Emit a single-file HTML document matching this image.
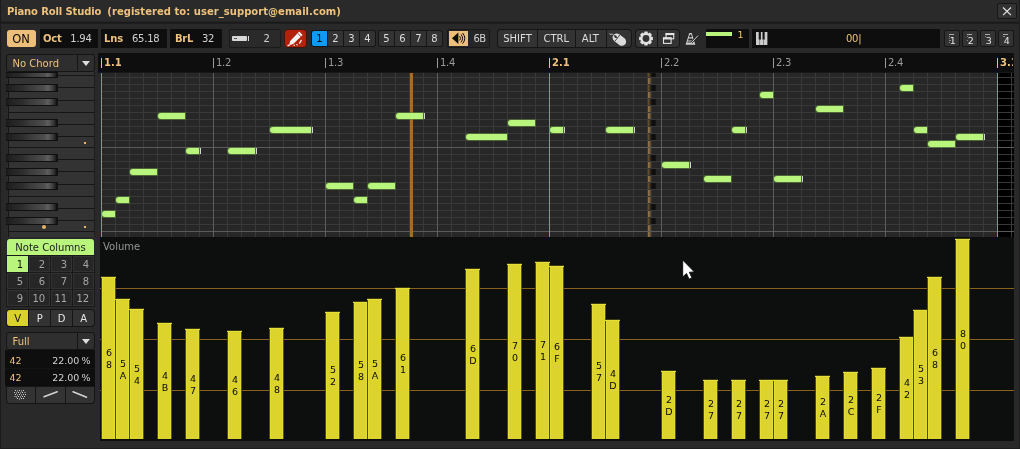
<!DOCTYPE html>
<html><head><meta charset="utf-8"><title>Piano Roll Studio</title>
<style>
html,body{margin:0;padding:0;}
body{width:1020px;height:449px;overflow:hidden;background:#282828;position:relative;font-family:"DejaVu Sans","Liberation Sans",sans-serif;font-size:10px;}
div{position:absolute;box-sizing:border-box;}
svg{position:absolute;overflow:visible;}
.btn{background:#2f2f2f;border:1px solid #161616;}
.dark{background:#0d0e0d;}
.n{background:#b9f47d;height:6px;border-radius:3px 0 0 3px;box-shadow:0 0 0 1px rgba(96,140,56,.55);}
.t{background:#d4d4d4;width:1px;height:6px;}
.bar{width:15px;background:linear-gradient(90deg,#4c4912 0,#4c4912 1px,#dcd42c 1px,#dcd42c 14px,#55521a 14px);}
.bar i{position:absolute;left:0;top:0;width:15px;height:2px;background:linear-gradient(180deg,#3c3a10 0,#3c3a10 1px,#e6df38 1px);}
.bar b{box-sizing:border-box;position:absolute;left:1px;top:2px;bottom:1px;width:13px;border-left:1px solid #e4dc34;border-right:1px solid #e4dc34;}
.bl{color:#0a0a04;font-size:9.5px;line-height:12px;width:14px;text-align:center;}
</style></head><body><div id="app" style="left:0;top:0;width:1020px;height:449px;will-change:transform;overflow:hidden;">

<div style="left:0px;top:0px;width:1020px;height:22px;background:#2a2a2a;"></div>
<div style="left:0px;top:21px;width:1020px;height:1px;background:#242424;"></div>
<div style="left:0px;top:22px;width:1020px;height:1px;background:#1a1a1a;"></div>
<div style="left:0px;top:23px;width:1020px;height:1px;background:#1d1d1d;"></div>
<div style="left:0px;top:24px;width:1020px;height:425px;background:#292929;"></div>
<div style="left:0px;top:0px;width:1px;height:449px;background:#1b1b1b;"></div>
<div style="left:1019px;top:0px;width:1px;height:449px;background:#1f1f1f;"></div>
<div style="left:0px;top:448px;width:1020px;height:1px;background:#1e1e1e;"></div>
<div style="top:5.74px;font-size:10px;line-height:12.0px;color:#eec27e;white-space:pre;font-weight:bold;left:7px;letter-spacing:-0.13px;">Piano Roll Studio</div>
<div style="top:5.74px;font-size:10px;line-height:12.0px;color:#eec27e;white-space:pre;font-weight:bold;left:107.3px;letter-spacing:0.04px;">(registered to: user_support@email.com)</div>
<div style="left:997px;top:3px;width:20px;height:16px;border-radius:2px;background:#333333;border:1px solid #171717;"></div>
<svg style="left:1002px;top:6.5px" width="10" height="9" viewBox="0 0 10 9"><path d="M1 0.5L9 8.2M9 0.5L1 8.2" stroke="#e4e4e4" stroke-width="1.15" fill="none"/></svg>
<div style="left:7px;top:30px;width:29px;height:17px;background:#ecbf7a;border-radius:3px;"></div>
<div style="top:32.72px;font-size:11.5px;line-height:13.8px;color:#080808;white-space:pre;left:-78.9px;width:200px;text-align:center;">ON</div>
<div class="dark" style="left:40px;top:29px;width:58px;height:19px;"></div>
<div style="top:32.94px;font-size:10px;line-height:12.0px;color:#eec27e;white-space:pre;font-weight:bold;left:43px;letter-spacing:-0.2px;">Oct</div>
<div style="top:32.94px;font-size:10px;line-height:12.0px;color:#d2d2d2;white-space:pre;left:70.3px;letter-spacing:-0.25px;">1.94</div>
<div class="dark" style="left:101px;top:29px;width:66px;height:19px;"></div>
<div style="top:32.94px;font-size:10px;line-height:12.0px;color:#eec27e;white-space:pre;font-weight:bold;left:104px;letter-spacing:-0.1px;">Lns</div>
<div style="top:32.94px;font-size:10px;line-height:12.0px;color:#d2d2d2;white-space:pre;left:132px;letter-spacing:-0.25px;">65.18</div>
<div class="dark" style="left:170px;top:29px;width:52px;height:19px;"></div>
<div style="top:32.94px;font-size:10px;line-height:12.0px;color:#eec27e;white-space:pre;font-weight:bold;left:175px;letter-spacing:-0.3px;">BrL</div>
<div style="top:32.94px;font-size:10px;line-height:12.0px;color:#d2d2d2;white-space:pre;left:202px;letter-spacing:-0.25px;">32</div>
<div style="left:229px;top:29px;width:52px;height:19px;border-radius:2px;background:#2a2a2a;border:1px solid #1a1a1a;"></div>
<div style="left:232px;top:36px;width:15px;height:5px;background:#d8d8d8;border-radius:1px;"></div>
<div style="left:234px;top:38px;width:3px;height:1px;background:#555;"></div>
<div style="left:247.5px;top:36px;width:1px;height:5px;background:#d8d8d8;"></div>
<div style="top:32.94px;font-size:10px;line-height:12.0px;color:#d2d2d2;white-space:pre;left:166.7px;width:200px;text-align:center;">2</div>
<div style="left:284px;top:29px;width:23px;height:19px;background:#b3220c;border-radius:4px;border:1px solid #3c150e;"></div>
<svg style="left:284px;top:29px" width="23" height="19" viewBox="0 0 23 19"><path d="M15.3 2.6L18.6 5.9L9.2 15L5.2 16.2L6.2 12Z" fill="#f4f4f4"/><path d="M13.7 4.4L17 7.7" stroke="#b3220c" stroke-width="0.9"/><path d="M3.6 16.9L5.6 15.9" stroke="#f4f4f4" stroke-width="1.2"/><circle cx="10.2" cy="16.3" r="0.75" fill="#f4f4f4"/><circle cx="13" cy="15.8" r="0.75" fill="#f4f4f4"/><path d="M15.6 14.2L17.2 11.4" stroke="#f4f4f4" stroke-width="1.3" stroke-linecap="round"/></svg>
<div style="left:311px;top:30px;width:65px;height:17px;background:#151515;border-radius:3px;"></div>
<div style="left:312px;top:31px;width:15px;height:15px;background:#0c9bf6;border-radius:2px 0 0 2px;"></div>
<div style="left:328px;top:31px;width:15px;height:15px;background:#333333;"></div>
<div style="left:344px;top:31px;width:15px;height:15px;background:#333333;"></div>
<div style="left:360px;top:31px;width:15px;height:15px;background:#333333;border-radius:0 2px 2px 0;"></div>
<div style="top:32.94px;font-size:10px;line-height:12.0px;color:#0a0a0a;white-space:pre;left:219.5px;width:200px;text-align:center;">1</div>
<div style="top:32.94px;font-size:10px;line-height:12.0px;color:#dcdcdc;white-space:pre;left:235.5px;width:200px;text-align:center;">2</div>
<div style="top:32.94px;font-size:10px;line-height:12.0px;color:#dcdcdc;white-space:pre;left:251.5px;width:200px;text-align:center;">3</div>
<div style="top:32.94px;font-size:10px;line-height:12.0px;color:#dcdcdc;white-space:pre;left:267.5px;width:200px;text-align:center;">4</div>
<div style="left:378px;top:30px;width:65px;height:17px;background:#151515;border-radius:3px;"></div>
<div style="left:379px;top:31px;width:15px;height:15px;background:#333333;border-radius:2px 0 0 2px;"></div>
<div style="left:395px;top:31px;width:15px;height:15px;background:#333333;"></div>
<div style="left:411px;top:31px;width:15px;height:15px;background:#333333;"></div>
<div style="left:427px;top:31px;width:15px;height:15px;background:#333333;border-radius:0 2px 2px 0;"></div>
<div style="top:32.94px;font-size:10px;line-height:12.0px;color:#dcdcdc;white-space:pre;left:286.5px;width:200px;text-align:center;">5</div>
<div style="top:32.94px;font-size:10px;line-height:12.0px;color:#dcdcdc;white-space:pre;left:302.5px;width:200px;text-align:center;">6</div>
<div style="top:32.94px;font-size:10px;line-height:12.0px;color:#dcdcdc;white-space:pre;left:318.5px;width:200px;text-align:center;">7</div>
<div style="top:32.94px;font-size:10px;line-height:12.0px;color:#dcdcdc;white-space:pre;left:334.5px;width:200px;text-align:center;">8</div>
<div style="left:447px;top:29px;width:43px;height:19px;border-radius:2px;background:#262626;border:1px solid #181818;"></div>
<div style="left:449px;top:31px;width:19px;height:15px;background:#ecbf7a;"></div>
<svg style="left:449px;top:31px" width="19" height="15" viewBox="0 0 19 15"><path d="M3 7.3L9.4 1.6V13Z" fill="#0c0c0c"/><path d="M10.6 5.2Q12.6 7.3 10.6 9.4M12 3.4Q15.2 7.3 12 11.2M13.6 2Q18 7.3 13.6 12.6" stroke="#0c0c0c" stroke-width="1" fill="none"/></svg>
<div style="top:32.94px;font-size:10px;line-height:12.0px;color:#d2d2d2;white-space:pre;left:379.6px;width:200px;text-align:center;letter-spacing:-0.4px;">6B</div>
<div style="left:497px;top:29px;width:135px;height:19px;background:#151515;border-radius:4px;"></div>
<div style="left:498px;top:30px;width:39px;height:17px;background:#333333;border-radius:3px 0 0 3px;"></div>
<div style="left:538px;top:30px;width:37px;height:17px;background:#333333;"></div>
<div style="left:576px;top:30px;width:30px;height:17px;background:#333333;"></div>
<div style="left:607px;top:30px;width:24px;height:17px;background:#333333;border-radius:0 3px 3px 0;"></div>
<div style="top:32.94px;font-size:10px;line-height:12.0px;color:#dcdcdc;white-space:pre;left:417.5px;width:200px;text-align:center;">SHIFT</div>
<div style="top:32.94px;font-size:10px;line-height:12.0px;color:#dcdcdc;white-space:pre;left:456.29999999999995px;width:200px;text-align:center;">CTRL</div>
<div style="top:32.94px;font-size:10px;line-height:12.0px;color:#dcdcdc;white-space:pre;left:490.4px;width:200px;text-align:center;">ALT</div>
<svg style="left:608px;top:30px" width="22" height="17" viewBox="0 0 22 17"><g transform="translate(11.4 9.7) rotate(-52)"><rect x="-4.2" y="-7.6" width="8.4" height="15" rx="4.2" fill="#dadada"/><path d="M0 -7.4V-2.6M-4 -2.6H4" stroke="#333" stroke-width="0.8"/><rect x="-1" y="-6.4" width="2" height="3" rx="1" fill="#333"/><path d="M0 -7.6Q0.4 -9.2 -0.8 -9.8T-1.2 -11.6" stroke="#dadada" stroke-width="0.8" fill="none"/></g></svg>
<div style="left:635px;top:29px;width:45px;height:19px;background:#151515;border-radius:4px;"></div>
<div style="left:636px;top:30px;width:21px;height:17px;background:#333333;border-radius:3px 0 0 3px;"></div>
<div style="left:658px;top:30px;width:21px;height:17px;background:#333333;border-radius:0 3px 3px 0;"></div>
<svg style="left:637.5px;top:30.8px" width="16" height="15" viewBox="-8 -7.5 16 15"><g fill="#e2e2e2"><path d="M-1.5 -6.9L1.5 -6.9L2.3 -4L-2.3 -4Z" transform="rotate(0)"/><path d="M-1.5 -6.9L1.5 -6.9L2.3 -4L-2.3 -4Z" transform="rotate(45)"/><path d="M-1.5 -6.9L1.5 -6.9L2.3 -4L-2.3 -4Z" transform="rotate(90)"/><path d="M-1.5 -6.9L1.5 -6.9L2.3 -4L-2.3 -4Z" transform="rotate(135)"/><path d="M-1.5 -6.9L1.5 -6.9L2.3 -4L-2.3 -4Z" transform="rotate(180)"/><path d="M-1.5 -6.9L1.5 -6.9L2.3 -4L-2.3 -4Z" transform="rotate(225)"/><path d="M-1.5 -6.9L1.5 -6.9L2.3 -4L-2.3 -4Z" transform="rotate(270)"/><path d="M-1.5 -6.9L1.5 -6.9L2.3 -4L-2.3 -4Z" transform="rotate(315)"/><circle r="5.3"/></g><circle r="3.4" fill="#333"/></svg>
<svg style="left:660px;top:30px" width="18" height="17" viewBox="660 30 18 17"><rect x="666.1" y="33.6" width="7.6" height="5.2" fill="none" stroke="#e2e2e2" stroke-width="1.1"/><rect x="665.55" y="33" width="8.7" height="2.1" fill="#e2e2e2"/><rect x="663.5" y="38" width="7.6" height="5.4" fill="#333" stroke="#e2e2e2" stroke-width="1.1"/><rect x="662.95" y="37.3" width="8.7" height="2.2" fill="#e2e2e2"/></svg>
<svg style="left:684px;top:32px" width="15" height="14" viewBox="0 0 15 14"><path d="M5.3 1H7.7L11.4 12.8H1.6Z" fill="#cfcfcf"/><path d="M5.8 2.6H7.2L8 5.2H5Z M4.6 6.4H8.4L9 8.6H4Z" fill="#262626"/><path d="M3.4 10H7" stroke="#262626" stroke-width="1"/><path d="M7.4 10.8L14 3.6" stroke="#262626" stroke-width="2.2"/><path d="M7.4 10.8L14 3.6" stroke="#cfcfcf" stroke-width="1"/></svg>
<div class="dark" style="left:706px;top:29px;width:43px;height:19px;"></div>
<div style="left:706px;top:32px;width:26px;height:4px;background:#b9f47d;"></div>
<div style="top:29.21px;font-size:9.5px;line-height:11.4px;color:#eec27e;white-space:pre;left:737.5px;">1</div>
<div class="dark" style="left:752px;top:29px;width:188px;height:19px;"></div>
<svg style="left:755.8px;top:32px" width="11.4" height="13" viewBox="0 0 11.4 13"><rect x="0" y="0" width="11.4" height="13" fill="#cdcdcd"/><rect x="2.7" y="0" width="2.2" height="7.6" fill="#161616"/><rect x="6.5" y="0" width="2.2" height="7.6" fill="#161616"/><rect x="3.55" y="7.6" width="0.5" height="5.4" fill="#444"/><rect x="7.35" y="7.6" width="0.5" height="5.4" fill="#444"/></svg>
<div style="top:32.94px;font-size:10px;line-height:12.0px;color:#eec27e;white-space:pre;left:846px;letter-spacing:-0.25px;">00|</div>
<div style="left:944px;top:30px;width:16px;height:17px;border-radius:2px;background:#333333;border:1px solid #151515;"></div>
<div style="top:35.21px;font-size:9.5px;line-height:11.4px;color:#e4e4e4;white-space:pre;left:852.7px;width:200px;text-align:center;">1</div>
<div style="left:949px;top:34px;width:5px;height:1px;background:#a8a8a8;"></div>
<div style="left:962px;top:30px;width:16px;height:17px;border-radius:2px;background:#333333;border:1px solid #151515;"></div>
<div style="top:35.21px;font-size:9.5px;line-height:11.4px;color:#e4e4e4;white-space:pre;left:870.7px;width:200px;text-align:center;">2</div>
<div style="left:967px;top:34px;width:5px;height:1px;background:#a8a8a8;"></div>
<div style="left:980px;top:30px;width:16px;height:17px;border-radius:2px;background:#333333;border:1px solid #151515;"></div>
<div style="top:35.21px;font-size:9.5px;line-height:11.4px;color:#e4e4e4;white-space:pre;left:888.7px;width:200px;text-align:center;">3</div>
<div style="left:985px;top:34px;width:5px;height:1px;background:#a8a8a8;"></div>
<div style="left:998px;top:30px;width:16px;height:17px;border-radius:2px;background:#333333;border:1px solid #151515;"></div>
<div style="top:35.21px;font-size:9.5px;line-height:11.4px;color:#e4e4e4;white-space:pre;left:906.7px;width:200px;text-align:center;">4</div>
<div style="left:1003px;top:34px;width:5px;height:1px;background:#a8a8a8;"></div>
<div style="left:949px;top:36px;width:1px;height:1px;background:#8a8a8a;"></div>
<div style="left:949px;top:38px;width:1px;height:1px;background:#8a8a8a;"></div>
<div style="left:949px;top:40px;width:2px;height:1px;background:#8a8a8a;"></div>
<div style="left:949px;top:42px;width:1px;height:1px;background:#8a8a8a;"></div>
<div style="left:967px;top:36px;width:1px;height:1px;background:#8a8a8a;"></div>
<div style="left:967px;top:40px;width:1px;height:1px;background:#8a8a8a;"></div>
<div style="left:985px;top:36px;width:1px;height:1px;background:#8a8a8a;"></div>
<div style="left:1003px;top:36px;width:2px;height:1px;background:#8a8a8a;"></div>
<div style="left:6px;top:54px;width:89px;height:18px;border-radius:3px;background:#2e2e2e;border:1px solid #151515;"></div>
<div style="left:77px;top:55px;width:1px;height:16px;background:#151515;"></div>
<div style="top:57.84px;font-size:10px;line-height:12.0px;color:#eec27e;white-space:pre;left:12.5px;">No Chord</div>
<svg style="left:82px;top:61px" width="8" height="5" viewBox="0 0 8 5"><path d="M0 0H8L4 5Z" fill="#dedede"/></svg>
<div class="dark" style="left:98px;top:53px;width:916px;height:19px;"></div>
<div style="left:101px;top:58px;width:1px;height:10px;background:#eec27e;"></div>
<div style="top:57.44px;font-size:10px;line-height:12.0px;color:#eec27e;white-space:pre;font-weight:bold;left:104px;letter-spacing:0px;">1.1</div>
<div style="left:213px;top:58px;width:1px;height:10px;background:#9a9a9a;"></div>
<div style="top:57.44px;font-size:10px;line-height:12.0px;color:#9a9a9a;white-space:pre;left:216px;letter-spacing:-0.3px;">1.2</div>
<div style="left:325px;top:58px;width:1px;height:10px;background:#9a9a9a;"></div>
<div style="top:57.44px;font-size:10px;line-height:12.0px;color:#9a9a9a;white-space:pre;left:328px;letter-spacing:-0.3px;">1.3</div>
<div style="left:437px;top:58px;width:1px;height:10px;background:#9a9a9a;"></div>
<div style="top:57.44px;font-size:10px;line-height:12.0px;color:#9a9a9a;white-space:pre;left:440px;letter-spacing:-0.3px;">1.4</div>
<div style="left:549px;top:58px;width:1px;height:10px;background:#eec27e;"></div>
<div style="top:57.44px;font-size:10px;line-height:12.0px;color:#eec27e;white-space:pre;font-weight:bold;left:552px;letter-spacing:0px;">2.1</div>
<div style="left:661px;top:58px;width:1px;height:10px;background:#9a9a9a;"></div>
<div style="top:57.44px;font-size:10px;line-height:12.0px;color:#9a9a9a;white-space:pre;left:664px;letter-spacing:-0.3px;">2.2</div>
<div style="left:773px;top:58px;width:1px;height:10px;background:#9a9a9a;"></div>
<div style="top:57.44px;font-size:10px;line-height:12.0px;color:#9a9a9a;white-space:pre;left:776px;letter-spacing:-0.3px;">2.3</div>
<div style="left:885px;top:58px;width:1px;height:10px;background:#9a9a9a;"></div>
<div style="top:57.44px;font-size:10px;line-height:12.0px;color:#9a9a9a;white-space:pre;left:888px;letter-spacing:-0.3px;">2.4</div>
<div style="left:997px;top:58px;width:1px;height:10px;background:#eec27e;"></div>
<div style="left:1000px;top:57.44px;width:13px;height:12px;overflow:hidden;font-size:10px;line-height:12px;color:#eec27e;font-weight:bold;">3.1</div>
<div style="left:6px;top:72px;width:89px;height:165px;background:#333333;"></div>
<div style="left:6px;top:72px;width:2px;height:165px;background:#2a2a2a;"></div>
<div style="left:8px;top:72px;width:1px;height:165px;background:#151515;"></div>
<div style="left:58px;top:75px;width:37px;height:1px;background:#161616;"></div>
<div style="left:58px;top:87px;width:37px;height:1px;background:#161616;"></div>
<div style="left:58px;top:100px;width:37px;height:1px;background:#161616;"></div>
<div style="left:9px;top:112px;width:86px;height:1px;background:#161616;"></div>
<div style="left:58px;top:124px;width:37px;height:1px;background:#161616;"></div>
<div style="left:58px;top:136px;width:37px;height:1px;background:#161616;"></div>
<div style="left:9px;top:147px;width:86px;height:1px;background:#161616;"></div>
<div style="left:58px;top:159px;width:37px;height:1px;background:#161616;"></div>
<div style="left:58px;top:171px;width:37px;height:1px;background:#161616;"></div>
<div style="left:58px;top:184px;width:37px;height:1px;background:#161616;"></div>
<div style="left:9px;top:196px;width:86px;height:1px;background:#161616;"></div>
<div style="left:58px;top:208px;width:37px;height:1px;background:#161616;"></div>
<div style="left:58px;top:220px;width:37px;height:1px;background:#161616;"></div>
<div style="left:9px;top:231px;width:86px;height:1px;background:#161616;"></div>
<div style="left:94px;top:72px;width:1px;height:165px;background:#1e1e1e;"></div>
<div style="left:6px;top:72px;width:52px;height:6px;background:linear-gradient(90deg,#141414 0%,#1e1e1e 3%,#242424 12%,#2c2c2c 30%,#3a3a3a 45%,#444444 60%,#4e4e4e 74%,#5e5e5e 80%,#545454 84%,#2e2e2e 93%,#141414 97%,#0e0e0e 100%);border-top:1px solid #101010;border-bottom:1px solid #101010;"></div>
<div style="left:6px;top:84px;width:52px;height:8px;background:linear-gradient(90deg,#141414 0%,#1e1e1e 3%,#242424 12%,#2c2c2c 30%,#3a3a3a 45%,#444444 60%,#4e4e4e 74%,#5e5e5e 80%,#545454 84%,#2e2e2e 93%,#141414 97%,#0e0e0e 100%);border-top:1px solid #101010;border-bottom:1px solid #101010;"></div>
<div style="left:6px;top:98px;width:52px;height:8px;background:linear-gradient(90deg,#141414 0%,#1e1e1e 3%,#242424 12%,#2c2c2c 30%,#3a3a3a 45%,#444444 60%,#4e4e4e 74%,#5e5e5e 80%,#545454 84%,#2e2e2e 93%,#141414 97%,#0e0e0e 100%);border-top:1px solid #101010;border-bottom:1px solid #101010;"></div>
<div style="left:6px;top:119px;width:52px;height:8px;background:linear-gradient(90deg,#141414 0%,#1e1e1e 3%,#242424 12%,#2c2c2c 30%,#3a3a3a 45%,#444444 60%,#4e4e4e 74%,#5e5e5e 80%,#545454 84%,#2e2e2e 93%,#141414 97%,#0e0e0e 100%);border-top:1px solid #101010;border-bottom:1px solid #101010;"></div>
<div style="left:6px;top:133px;width:52px;height:8px;background:linear-gradient(90deg,#141414 0%,#1e1e1e 3%,#242424 12%,#2c2c2c 30%,#3a3a3a 45%,#444444 60%,#4e4e4e 74%,#5e5e5e 80%,#545454 84%,#2e2e2e 93%,#141414 97%,#0e0e0e 100%);border-top:1px solid #101010;border-bottom:1px solid #101010;"></div>
<div style="left:6px;top:154px;width:52px;height:8px;background:linear-gradient(90deg,#141414 0%,#1e1e1e 3%,#242424 12%,#2c2c2c 30%,#3a3a3a 45%,#444444 60%,#4e4e4e 74%,#5e5e5e 80%,#545454 84%,#2e2e2e 93%,#141414 97%,#0e0e0e 100%);border-top:1px solid #101010;border-bottom:1px solid #101010;"></div>
<div style="left:6px;top:168px;width:52px;height:8px;background:linear-gradient(90deg,#141414 0%,#1e1e1e 3%,#242424 12%,#2c2c2c 30%,#3a3a3a 45%,#444444 60%,#4e4e4e 74%,#5e5e5e 80%,#545454 84%,#2e2e2e 93%,#141414 97%,#0e0e0e 100%);border-top:1px solid #101010;border-bottom:1px solid #101010;"></div>
<div style="left:6px;top:182px;width:52px;height:8px;background:linear-gradient(90deg,#141414 0%,#1e1e1e 3%,#242424 12%,#2c2c2c 30%,#3a3a3a 45%,#444444 60%,#4e4e4e 74%,#5e5e5e 80%,#545454 84%,#2e2e2e 93%,#141414 97%,#0e0e0e 100%);border-top:1px solid #101010;border-bottom:1px solid #101010;"></div>
<div style="left:6px;top:203px;width:52px;height:8px;background:linear-gradient(90deg,#141414 0%,#1e1e1e 3%,#242424 12%,#2c2c2c 30%,#3a3a3a 45%,#444444 60%,#4e4e4e 74%,#5e5e5e 80%,#545454 84%,#2e2e2e 93%,#141414 97%,#0e0e0e 100%);border-top:1px solid #101010;border-bottom:1px solid #101010;"></div>
<div style="left:6px;top:217px;width:52px;height:8px;background:linear-gradient(90deg,#141414 0%,#1e1e1e 3%,#242424 12%,#2c2c2c 30%,#3a3a3a 45%,#444444 60%,#4e4e4e 74%,#5e5e5e 80%,#545454 84%,#2e2e2e 93%,#141414 97%,#0e0e0e 100%);border-top:1px solid #101010;border-bottom:1px solid #101010;"></div>
<div style="left:84px;top:142px;width:2px;height:2px;background:#e8b468;"></div>
<div style="left:84px;top:226px;width:2px;height:2px;background:#e8b468;"></div>
<div style="left:42px;top:225px;width:4px;height:4px;background:#e8b468;border-radius:2px;"></div>
<div style="left:98px;top:72px;width:916px;height:1px;background:#171717;"></div>
<div style="left:100px;top:73px;width:914px;height:164px;overflow:hidden;background:#272727;">
<div style="left:15px;top:-1px;width:1px;height:165px;background:#393939;"></div>
<div style="left:29px;top:-1px;width:1px;height:165px;background:#393939;"></div>
<div style="left:43px;top:-1px;width:1px;height:165px;background:#393939;"></div>
<div style="left:57px;top:-1px;width:1px;height:165px;background:#393939;"></div>
<div style="left:71px;top:-1px;width:1px;height:165px;background:#393939;"></div>
<div style="left:85px;top:-1px;width:1px;height:165px;background:#393939;"></div>
<div style="left:99px;top:-1px;width:1px;height:165px;background:#393939;"></div>
<div style="left:127px;top:-1px;width:1px;height:165px;background:#393939;"></div>
<div style="left:141px;top:-1px;width:1px;height:165px;background:#393939;"></div>
<div style="left:155px;top:-1px;width:1px;height:165px;background:#393939;"></div>
<div style="left:169px;top:-1px;width:1px;height:165px;background:#393939;"></div>
<div style="left:183px;top:-1px;width:1px;height:165px;background:#393939;"></div>
<div style="left:197px;top:-1px;width:1px;height:165px;background:#393939;"></div>
<div style="left:211px;top:-1px;width:1px;height:165px;background:#393939;"></div>
<div style="left:239px;top:-1px;width:1px;height:165px;background:#393939;"></div>
<div style="left:253px;top:-1px;width:1px;height:165px;background:#393939;"></div>
<div style="left:267px;top:-1px;width:1px;height:165px;background:#393939;"></div>
<div style="left:281px;top:-1px;width:1px;height:165px;background:#393939;"></div>
<div style="left:295px;top:-1px;width:1px;height:165px;background:#393939;"></div>
<div style="left:309px;top:-1px;width:1px;height:165px;background:#393939;"></div>
<div style="left:323px;top:-1px;width:1px;height:165px;background:#393939;"></div>
<div style="left:351px;top:-1px;width:1px;height:165px;background:#393939;"></div>
<div style="left:365px;top:-1px;width:1px;height:165px;background:#393939;"></div>
<div style="left:379px;top:-1px;width:1px;height:165px;background:#393939;"></div>
<div style="left:393px;top:-1px;width:1px;height:165px;background:#393939;"></div>
<div style="left:407px;top:-1px;width:1px;height:165px;background:#393939;"></div>
<div style="left:421px;top:-1px;width:1px;height:165px;background:#393939;"></div>
<div style="left:435px;top:-1px;width:1px;height:165px;background:#393939;"></div>
<div style="left:463px;top:-1px;width:1px;height:165px;background:#393939;"></div>
<div style="left:477px;top:-1px;width:1px;height:165px;background:#393939;"></div>
<div style="left:491px;top:-1px;width:1px;height:165px;background:#393939;"></div>
<div style="left:505px;top:-1px;width:1px;height:165px;background:#393939;"></div>
<div style="left:519px;top:-1px;width:1px;height:165px;background:#393939;"></div>
<div style="left:533px;top:-1px;width:1px;height:165px;background:#393939;"></div>
<div style="left:547px;top:-1px;width:1px;height:165px;background:#393939;"></div>
<div style="left:575px;top:-1px;width:1px;height:165px;background:#393939;"></div>
<div style="left:589px;top:-1px;width:1px;height:165px;background:#393939;"></div>
<div style="left:603px;top:-1px;width:1px;height:165px;background:#393939;"></div>
<div style="left:617px;top:-1px;width:1px;height:165px;background:#393939;"></div>
<div style="left:631px;top:-1px;width:1px;height:165px;background:#393939;"></div>
<div style="left:645px;top:-1px;width:1px;height:165px;background:#393939;"></div>
<div style="left:659px;top:-1px;width:1px;height:165px;background:#393939;"></div>
<div style="left:687px;top:-1px;width:1px;height:165px;background:#393939;"></div>
<div style="left:701px;top:-1px;width:1px;height:165px;background:#393939;"></div>
<div style="left:715px;top:-1px;width:1px;height:165px;background:#393939;"></div>
<div style="left:729px;top:-1px;width:1px;height:165px;background:#393939;"></div>
<div style="left:743px;top:-1px;width:1px;height:165px;background:#393939;"></div>
<div style="left:757px;top:-1px;width:1px;height:165px;background:#393939;"></div>
<div style="left:771px;top:-1px;width:1px;height:165px;background:#393939;"></div>
<div style="left:799px;top:-1px;width:1px;height:165px;background:#393939;"></div>
<div style="left:813px;top:-1px;width:1px;height:165px;background:#393939;"></div>
<div style="left:827px;top:-1px;width:1px;height:165px;background:#393939;"></div>
<div style="left:841px;top:-1px;width:1px;height:165px;background:#393939;"></div>
<div style="left:855px;top:-1px;width:1px;height:165px;background:#393939;"></div>
<div style="left:869px;top:-1px;width:1px;height:165px;background:#393939;"></div>
<div style="left:883px;top:-1px;width:1px;height:165px;background:#393939;"></div>
<div style="left:911px;top:-1px;width:1px;height:165px;background:#393939;"></div>
<div style="left:898px;top:-1px;width:16px;height:165px;background:#000;"></div>
<div style="left:911px;top:-1px;width:1px;height:165px;background:#3a3a3a;"></div>
<div style="left:548px;top:-1px;width:4px;height:165px;background:linear-gradient(90deg,#98794a,#7a6240 40%,#272727);"></div>
<div style="left:548px;top:-1px;width:4px;height:5px;background:linear-gradient(90deg,#6e5836,#3a2f1e 50%,#0e0e0e);"></div>
<div style="left:552px;top:-1px;width:4px;height:5px;background:linear-gradient(90deg,#0e0e0e 70%,#1a1a1a);"></div>
<div style="left:548px;top:11px;width:4px;height:7px;background:linear-gradient(90deg,#6e5836,#3a2f1e 50%,#0e0e0e);"></div>
<div style="left:552px;top:11px;width:4px;height:7px;background:linear-gradient(90deg,#0e0e0e 70%,#1a1a1a);"></div>
<div style="left:548px;top:25px;width:4px;height:7px;background:linear-gradient(90deg,#6e5836,#3a2f1e 50%,#0e0e0e);"></div>
<div style="left:552px;top:25px;width:4px;height:7px;background:linear-gradient(90deg,#0e0e0e 70%,#1a1a1a);"></div>
<div style="left:548px;top:46px;width:4px;height:7px;background:linear-gradient(90deg,#6e5836,#3a2f1e 50%,#0e0e0e);"></div>
<div style="left:552px;top:46px;width:4px;height:7px;background:linear-gradient(90deg,#0e0e0e 70%,#1a1a1a);"></div>
<div style="left:548px;top:60px;width:4px;height:7px;background:linear-gradient(90deg,#6e5836,#3a2f1e 50%,#0e0e0e);"></div>
<div style="left:552px;top:60px;width:4px;height:7px;background:linear-gradient(90deg,#0e0e0e 70%,#1a1a1a);"></div>
<div style="left:548px;top:81px;width:4px;height:7px;background:linear-gradient(90deg,#6e5836,#3a2f1e 50%,#0e0e0e);"></div>
<div style="left:552px;top:81px;width:4px;height:7px;background:linear-gradient(90deg,#0e0e0e 70%,#1a1a1a);"></div>
<div style="left:548px;top:95px;width:4px;height:7px;background:linear-gradient(90deg,#6e5836,#3a2f1e 50%,#0e0e0e);"></div>
<div style="left:552px;top:95px;width:4px;height:7px;background:linear-gradient(90deg,#0e0e0e 70%,#1a1a1a);"></div>
<div style="left:548px;top:109px;width:4px;height:7px;background:linear-gradient(90deg,#6e5836,#3a2f1e 50%,#0e0e0e);"></div>
<div style="left:552px;top:109px;width:4px;height:7px;background:linear-gradient(90deg,#0e0e0e 70%,#1a1a1a);"></div>
<div style="left:548px;top:130px;width:4px;height:7px;background:linear-gradient(90deg,#6e5836,#3a2f1e 50%,#0e0e0e);"></div>
<div style="left:552px;top:130px;width:4px;height:7px;background:linear-gradient(90deg,#0e0e0e 70%,#1a1a1a);"></div>
<div style="left:548px;top:144px;width:4px;height:7px;background:linear-gradient(90deg,#6e5836,#3a2f1e 50%,#0e0e0e);"></div>
<div style="left:552px;top:144px;width:4px;height:7px;background:linear-gradient(90deg,#0e0e0e 70%,#1a1a1a);"></div>
<div style="left:1px;top:4px;width:913px;height:1px;background:#393939;"></div>
<div style="left:1px;top:11px;width:913px;height:1px;background:#393939;"></div>
<div style="left:1px;top:18px;width:913px;height:1px;background:#393939;"></div>
<div style="left:1px;top:25px;width:913px;height:1px;background:#393939;"></div>
<div style="left:1px;top:32px;width:913px;height:1px;background:#393939;"></div>
<div style="left:1px;top:39px;width:913px;height:1px;background:#393939;"></div>
<div style="left:1px;top:46px;width:913px;height:1px;background:#393939;"></div>
<div style="left:1px;top:53px;width:913px;height:1px;background:#393939;"></div>
<div style="left:1px;top:60px;width:913px;height:1px;background:#393939;"></div>
<div style="left:1px;top:67px;width:913px;height:1px;background:#393939;"></div>
<div style="left:1px;top:74px;width:913px;height:1px;background:#5a5a5a;"></div>
<div style="left:1px;top:81px;width:913px;height:1px;background:#393939;"></div>
<div style="left:1px;top:88px;width:913px;height:1px;background:#393939;"></div>
<div style="left:1px;top:95px;width:913px;height:1px;background:#393939;"></div>
<div style="left:1px;top:102px;width:913px;height:1px;background:#393939;"></div>
<div style="left:1px;top:109px;width:913px;height:1px;background:#393939;"></div>
<div style="left:1px;top:116px;width:913px;height:1px;background:#393939;"></div>
<div style="left:1px;top:123px;width:913px;height:1px;background:#393939;"></div>
<div style="left:1px;top:130px;width:913px;height:1px;background:#393939;"></div>
<div style="left:1px;top:137px;width:913px;height:1px;background:#393939;"></div>
<div style="left:1px;top:144px;width:913px;height:1px;background:#393939;"></div>
<div style="left:1px;top:151px;width:913px;height:1px;background:#393939;"></div>
<div style="left:1px;top:158px;width:913px;height:1px;background:#5a5a5a;"></div>
<div style="left:1px;top:-1px;width:1px;height:165px;background:#b98a44;"></div>
<div style="left:113px;top:-1px;width:1px;height:165px;background:#5e5e5e;"></div>
<div style="left:225px;top:-1px;width:1px;height:165px;background:#5e5e5e;"></div>
<div style="left:337px;top:-1px;width:1px;height:165px;background:#5e5e5e;"></div>
<div style="left:449px;top:-1px;width:1px;height:165px;background:#b98a44;"></div>
<div style="left:561px;top:-1px;width:1px;height:165px;background:#5e5e5e;"></div>
<div style="left:673px;top:-1px;width:1px;height:165px;background:#5e5e5e;"></div>
<div style="left:785px;top:-1px;width:1px;height:165px;background:#5e5e5e;"></div>
<div style="left:897px;top:-1px;width:1px;height:165px;background:#b98a44;"></div>
<div style="left:310px;top:-1px;width:3px;height:165px;background:#a06e24;"></div>
<div class="n" style="left:2px;top:138px;width:13px;height:6px;"></div>
<div class="n" style="left:16px;top:124px;width:13px;height:6px;"></div>
<div class="n" style="left:30px;top:96px;width:27px;height:6px;"></div>
<div class="n" style="left:58px;top:40px;width:27px;height:6px;"></div>
<div class="n" style="left:86px;top:75px;width:13px;height:6px;"></div>
<div class="t" style="left:100px;top:75px;width:1px;height:6px;"></div>
<div class="n" style="left:128px;top:75px;width:27px;height:6px;"></div>
<div class="t" style="left:156px;top:75px;width:1px;height:6px;"></div>
<div class="n" style="left:170px;top:54px;width:41px;height:6px;"></div>
<div class="t" style="left:212px;top:54px;width:1px;height:6px;"></div>
<div class="n" style="left:226px;top:110px;width:27px;height:6px;"></div>
<div class="n" style="left:254px;top:124px;width:13px;height:6px;"></div>
<div class="n" style="left:268px;top:110px;width:27px;height:6px;"></div>
<div class="n" style="left:296px;top:40px;width:27px;height:6px;"></div>
<div class="t" style="left:324px;top:40px;width:1px;height:6px;"></div>
<div class="n" style="left:366px;top:61px;width:41px;height:6px;"></div>
<div class="n" style="left:408px;top:47px;width:27px;height:6px;"></div>
<div class="n" style="left:450px;top:54px;width:13px;height:6px;"></div>
<div class="t" style="left:464px;top:54px;width:1px;height:6px;"></div>
<div class="n" style="left:506px;top:54px;width:27px;height:6px;"></div>
<div class="t" style="left:534px;top:54px;width:1px;height:6px;"></div>
<div class="n" style="left:562px;top:89px;width:27px;height:6px;"></div>
<div class="t" style="left:590px;top:89px;width:1px;height:6px;"></div>
<div class="n" style="left:604px;top:103px;width:27px;height:6px;"></div>
<div class="n" style="left:632px;top:54px;width:13px;height:6px;"></div>
<div class="t" style="left:646px;top:54px;width:1px;height:6px;"></div>
<div class="n" style="left:660px;top:19px;width:13px;height:6px;"></div>
<div class="n" style="left:674px;top:103px;width:27px;height:6px;"></div>
<div class="t" style="left:702px;top:103px;width:1px;height:6px;"></div>
<div class="n" style="left:716px;top:33px;width:27px;height:6px;"></div>
<div class="n" style="left:800px;top:12px;width:13px;height:6px;"></div>
<div class="n" style="left:814px;top:54px;width:13px;height:6px;"></div>
<div class="n" style="left:828px;top:68px;width:27px;height:6px;"></div>
<div class="n" style="left:856px;top:61px;width:27px;height:6px;"></div>
<div class="t" style="left:884px;top:61px;width:1px;height:6px;"></div>
</div>
<div style="left:100px;top:237px;width:914px;height:204px;overflow:hidden;background:#0d0f0e;">
<div style="left:0;top:51px;width:914px;height:1px;background:#8a6220;"></div>
<div style="left:0;top:102px;width:914px;height:1px;background:#8a6220;"></div>
<div style="left:0;top:153px;width:914px;height:1px;background:#8a6220;"></div>
<div style="left:3px;top:4.14px;font-size:10px;line-height:12px;color:#949494;">Volume</div>
<div class="bar" style="left:1px;top:39px;height:163px;"><i></i><b></b></div>
<div class="bl" style="left:2px;top:109.7px;">6<br>8</div>
<div class="bar" style="left:15px;top:61px;height:141px;"><i></i><b></b></div>
<div class="bl" style="left:16px;top:120.7px;">5<br>A</div>
<div class="bar" style="left:29px;top:71px;height:131px;"><i></i><b></b></div>
<div class="bl" style="left:30px;top:125.7px;">5<br>4</div>
<div class="bar" style="left:57px;top:85px;height:117px;"><i></i><b></b></div>
<div class="bl" style="left:58px;top:132.7px;">4<br>B</div>
<div class="bar" style="left:85px;top:91px;height:111px;"><i></i><b></b></div>
<div class="bl" style="left:86px;top:135.7px;">4<br>7</div>
<div class="bar" style="left:127px;top:93px;height:109px;"><i></i><b></b></div>
<div class="bl" style="left:128px;top:136.7px;">4<br>6</div>
<div class="bar" style="left:169px;top:90px;height:112px;"><i></i><b></b></div>
<div class="bl" style="left:170px;top:135.2px;">4<br>8</div>
<div class="bar" style="left:225px;top:74px;height:128px;"><i></i><b></b></div>
<div class="bl" style="left:226px;top:127.2px;">5<br>2</div>
<div class="bar" style="left:253px;top:64px;height:138px;"><i></i><b></b></div>
<div class="bl" style="left:254px;top:122.2px;">5<br>8</div>
<div class="bar" style="left:267px;top:61px;height:141px;"><i></i><b></b></div>
<div class="bl" style="left:268px;top:120.7px;">5<br>A</div>
<div class="bar" style="left:295px;top:50px;height:152px;"><i></i><b></b></div>
<div class="bl" style="left:296px;top:115.2px;">6<br>1</div>
<div class="bar" style="left:365px;top:31px;height:171px;"><i></i><b></b></div>
<div class="bl" style="left:366px;top:105.7px;">6<br>D</div>
<div class="bar" style="left:407px;top:26px;height:176px;"><i></i><b></b></div>
<div class="bl" style="left:408px;top:103.2px;">7<br>0</div>
<div class="bar" style="left:435px;top:24px;height:178px;"><i></i><b></b></div>
<div class="bl" style="left:436px;top:102.2px;">7<br>1</div>
<div class="bar" style="left:449px;top:28px;height:174px;"><i></i><b></b></div>
<div class="bl" style="left:450px;top:104.2px;">6<br>F</div>
<div class="bar" style="left:491px;top:66px;height:136px;"><i></i><b></b></div>
<div class="bl" style="left:492px;top:123.2px;">5<br>7</div>
<div class="bar" style="left:505px;top:82px;height:120px;"><i></i><b></b></div>
<div class="bl" style="left:506px;top:131.2px;">4<br>D</div>
<div class="bar" style="left:561px;top:133px;height:69px;"><i></i><b></b></div>
<div class="bl" style="left:562px;top:156.7px;">2<br>D</div>
<div class="bar" style="left:603px;top:142px;height:60px;"><i></i><b></b></div>
<div class="bl" style="left:604px;top:161.2px;">2<br>7</div>
<div class="bar" style="left:631px;top:142px;height:60px;"><i></i><b></b></div>
<div class="bl" style="left:632px;top:161.2px;">2<br>7</div>
<div class="bar" style="left:659px;top:142px;height:60px;"><i></i><b></b></div>
<div class="bl" style="left:660px;top:161.2px;">2<br>7</div>
<div class="bar" style="left:673px;top:142px;height:60px;"><i></i><b></b></div>
<div class="bl" style="left:674px;top:161.2px;">2<br>7</div>
<div class="bar" style="left:715px;top:138px;height:64px;"><i></i><b></b></div>
<div class="bl" style="left:716px;top:159.2px;">2<br>A</div>
<div class="bar" style="left:743px;top:134px;height:68px;"><i></i><b></b></div>
<div class="bl" style="left:744px;top:157.2px;">2<br>C</div>
<div class="bar" style="left:771px;top:130px;height:72px;"><i></i><b></b></div>
<div class="bl" style="left:772px;top:155.2px;">2<br>F</div>
<div class="bar" style="left:799px;top:99px;height:103px;"><i></i><b></b></div>
<div class="bl" style="left:800px;top:139.7px;">4<br>2</div>
<div class="bar" style="left:813px;top:72px;height:130px;"><i></i><b></b></div>
<div class="bl" style="left:814px;top:126.2px;">5<br>3</div>
<div class="bar" style="left:827px;top:39px;height:163px;"><i></i><b></b></div>
<div class="bl" style="left:828px;top:109.7px;">6<br>8</div>
<div class="bar" style="left:855px;top:1px;height:201px;"><i></i><b></b></div>
<div class="bl" style="left:856px;top:90.7px;">8<br>0</div>
</div>
<div style="left:7px;top:239px;width:87px;height:16px;background:#b9f47d;border-radius:3px 3px 0 0;"></div>
<div style="top:241.84px;font-size:10px;line-height:12.0px;color:#1c1c1c;white-space:pre;left:-49.5px;width:200px;text-align:center;">Note Columns</div>
<div style="left:6px;top:255px;width:89px;height:52px;background:#191919;"></div>
<div style="left:7px;top:256px;width:21px;height:16px;background:#b9f47d;"></div>
<div style="top:258.74px;font-size:10px;line-height:12.0px;color:#111;white-space:pre;left:-177.3px;width:200px;text-align:right;letter-spacing:-0.3px;">1</div>
<div style="left:29px;top:256px;width:21px;height:16px;background:#262626;border:1px solid #323232;"></div>
<div style="top:258.74px;font-size:10px;line-height:12.0px;color:#a6a6a6;white-space:pre;left:-155.3px;width:200px;text-align:right;letter-spacing:-0.3px;">2</div>
<div style="left:51px;top:256px;width:21px;height:16px;background:#262626;border:1px solid #323232;"></div>
<div style="top:258.74px;font-size:10px;line-height:12.0px;color:#a6a6a6;white-space:pre;left:-133.3px;width:200px;text-align:right;letter-spacing:-0.3px;">3</div>
<div style="left:73px;top:256px;width:21px;height:16px;background:#262626;border:1px solid #323232;"></div>
<div style="top:258.74px;font-size:10px;line-height:12.0px;color:#a6a6a6;white-space:pre;left:-111.3px;width:200px;text-align:right;letter-spacing:-0.3px;">4</div>
<div style="left:7px;top:273px;width:21px;height:16px;background:#262626;border:1px solid #323232;"></div>
<div style="top:275.74px;font-size:10px;line-height:12.0px;color:#a6a6a6;white-space:pre;left:-177.3px;width:200px;text-align:right;letter-spacing:-0.3px;">5</div>
<div style="left:29px;top:273px;width:21px;height:16px;background:#262626;border:1px solid #323232;"></div>
<div style="top:275.74px;font-size:10px;line-height:12.0px;color:#a6a6a6;white-space:pre;left:-155.3px;width:200px;text-align:right;letter-spacing:-0.3px;">6</div>
<div style="left:51px;top:273px;width:21px;height:16px;background:#262626;border:1px solid #323232;"></div>
<div style="top:275.74px;font-size:10px;line-height:12.0px;color:#a6a6a6;white-space:pre;left:-133.3px;width:200px;text-align:right;letter-spacing:-0.3px;">7</div>
<div style="left:73px;top:273px;width:21px;height:16px;background:#262626;border:1px solid #323232;"></div>
<div style="top:275.74px;font-size:10px;line-height:12.0px;color:#a6a6a6;white-space:pre;left:-111.3px;width:200px;text-align:right;letter-spacing:-0.3px;">8</div>
<div style="left:7px;top:290px;width:21px;height:16px;background:#262626;border:1px solid #323232;"></div>
<div style="top:292.74px;font-size:10px;line-height:12.0px;color:#a6a6a6;white-space:pre;left:-177.3px;width:200px;text-align:right;letter-spacing:-0.3px;">9</div>
<div style="left:29px;top:290px;width:21px;height:16px;background:#262626;border:1px solid #323232;"></div>
<div style="top:292.74px;font-size:10px;line-height:12.0px;color:#a6a6a6;white-space:pre;left:-155.3px;width:200px;text-align:right;letter-spacing:-0.3px;">10</div>
<div style="left:51px;top:290px;width:21px;height:16px;background:#262626;border:1px solid #323232;"></div>
<div style="top:292.74px;font-size:10px;line-height:12.0px;color:#a6a6a6;white-space:pre;left:-133.3px;width:200px;text-align:right;letter-spacing:-0.3px;">11</div>
<div style="left:73px;top:290px;width:21px;height:16px;background:#262626;border:1px solid #323232;"></div>
<div style="top:292.74px;font-size:10px;line-height:12.0px;color:#a6a6a6;white-space:pre;left:-111.3px;width:200px;text-align:right;letter-spacing:-0.3px;">12</div>
<div style="left:6px;top:309px;width:89px;height:18px;background:#151515;border-radius:4px;"></div>
<div style="left:7px;top:310px;width:21px;height:16px;background:#d9d22c;border-radius:3px 0 0 3px;"></div>
<div style="left:29px;top:310px;width:21px;height:16px;background:#333333;"></div>
<div style="left:51px;top:310px;width:21px;height:16px;background:#333333;"></div>
<div style="left:73px;top:310px;width:21px;height:16px;background:#333333;border-radius:0 3px 3px 0;"></div>
<div style="top:312.74px;font-size:10px;line-height:12.0px;color:#15150a;white-space:pre;left:-82.3px;width:200px;text-align:center;">V</div>
<div style="top:312.74px;font-size:10px;line-height:12.0px;color:#e6e6e6;white-space:pre;left:-60.3px;width:200px;text-align:center;">P</div>
<div style="top:312.74px;font-size:10px;line-height:12.0px;color:#e6e6e6;white-space:pre;left:-38.3px;width:200px;text-align:center;">D</div>
<div style="top:312.74px;font-size:10px;line-height:12.0px;color:#e6e6e6;white-space:pre;left:-16.299999999999997px;width:200px;text-align:center;">A</div>
<div style="left:6px;top:332px;width:89px;height:18px;border-radius:3px;background:#2f2f2f;border:1px solid #151515;"></div>
<div style="left:77px;top:333px;width:1px;height:16px;background:#151515;"></div>
<div style="top:335.54px;font-size:10px;line-height:12.0px;color:#eec27e;white-space:pre;left:12.5px;">Full</div>
<svg style="left:82px;top:339px" width="8" height="5" viewBox="0 0 8 5"><path d="M0 0H8L4 5Z" fill="#dedede"/></svg>
<div class="dark" style="left:5px;top:350px;width:90px;height:36px;"></div>
<div style="left:5px;top:368px;width:90px;height:1px;background:#131413;"></div>
<div style="top:354.51px;font-size:9.5px;line-height:11.4px;color:#eec27e;white-space:pre;left:9.5px;">42</div>
<div style="top:354.51px;font-size:9.5px;line-height:11.4px;color:#d2d2d2;white-space:pre;left:-120.6px;width:200px;text-align:right;">22.00</div>
<div style="top:354.51px;font-size:9.5px;line-height:11.4px;color:#d2d2d2;white-space:pre;left:81.5px;">%</div>
<div style="top:371.51px;font-size:9.5px;line-height:11.4px;color:#eec27e;white-space:pre;left:9.5px;">42</div>
<div style="top:371.51px;font-size:9.5px;line-height:11.4px;color:#d2d2d2;white-space:pre;left:-120.6px;width:200px;text-align:right;">22.00</div>
<div style="top:371.51px;font-size:9.5px;line-height:11.4px;color:#d2d2d2;white-space:pre;left:81.5px;">%</div>
<div style="left:6px;top:386px;width:89px;height:18px;background:#151515;border-radius:0 0 4px 4px;"></div>
<div style="left:7px;top:387px;width:28px;height:16px;background:#333333;border-radius:0 0 0 3px;"></div>
<div style="left:36px;top:387px;width:29px;height:16px;background:#333333;"></div>
<div style="left:66px;top:387px;width:28px;height:16px;background:#333333;border-radius:0 0 3px 0;"></div>
<svg style="left:14.3px;top:390px" width="12" height="10" viewBox="0 0 12 10"><rect x="1" y="0" width="1" height="1" fill="#cfcfcf"/><rect x="3" y="0.5" width="1" height="1" fill="#cfcfcf"/><rect x="5" y="0" width="1" height="1" fill="#cfcfcf"/><rect x="7" y="0.5" width="1" height="1" fill="#cfcfcf"/><rect x="9" y="0" width="1" height="1" fill="#cfcfcf"/><rect x="0" y="2" width="1" height="1" fill="#cfcfcf"/><rect x="2" y="2.5" width="1" height="1" fill="#cfcfcf"/><rect x="4" y="2" width="1" height="1" fill="#cfcfcf"/><rect x="6" y="2.5" width="1" height="1" fill="#cfcfcf"/><rect x="8" y="2" width="1" height="1" fill="#cfcfcf"/><rect x="10.5" y="2" width="1" height="1" fill="#cfcfcf"/><rect x="1" y="4" width="1" height="1" fill="#cfcfcf"/><rect x="3" y="4.5" width="1" height="1" fill="#cfcfcf"/><rect x="5" y="4" width="1" height="1" fill="#cfcfcf"/><rect x="7" y="4.5" width="1" height="1" fill="#cfcfcf"/><rect x="9" y="4" width="1" height="1" fill="#cfcfcf"/><rect x="11" y="4" width="1" height="1" fill="#cfcfcf"/><rect x="0.5" y="6" width="1" height="1" fill="#cfcfcf"/><rect x="2" y="6.5" width="1" height="1" fill="#cfcfcf"/><rect x="4" y="6" width="1" height="1" fill="#cfcfcf"/><rect x="6" y="6.5" width="1" height="1" fill="#cfcfcf"/><rect x="8" y="6" width="1" height="1" fill="#cfcfcf"/><rect x="10" y="6" width="1" height="1" fill="#cfcfcf"/><rect x="3" y="8" width="1" height="1" fill="#cfcfcf"/><rect x="5" y="8.5" width="1" height="1" fill="#cfcfcf"/><rect x="7" y="8" width="1" height="1" fill="#cfcfcf"/><rect x="9" y="8" width="1" height="1" fill="#cfcfcf"/></svg>
<svg style="left:42px;top:389px" width="18" height="12" viewBox="0 0 18 12"><path d="M2 7.7L15.2 2.7" stroke="#d4d4d4" stroke-width="1.5" stroke-linecap="round"/></svg>
<svg style="left:71px;top:389px" width="18" height="12" viewBox="0 0 18 12"><path d="M2 2.7L15.6 8.2" stroke="#d4d4d4" stroke-width="1.5" stroke-linecap="round"/></svg>
<svg style="left:680px;top:258px" width="16" height="24" viewBox="680 258 16 24"><path d="M682.7 260L682.7 277L686.5 273.5L689 279.2L692 277.9L689.4 272.3L694.4 271.9Z" fill="#ffffff" stroke="#08080c" stroke-width="0.9" stroke-linejoin="round"/></svg>
</div></body></html>
